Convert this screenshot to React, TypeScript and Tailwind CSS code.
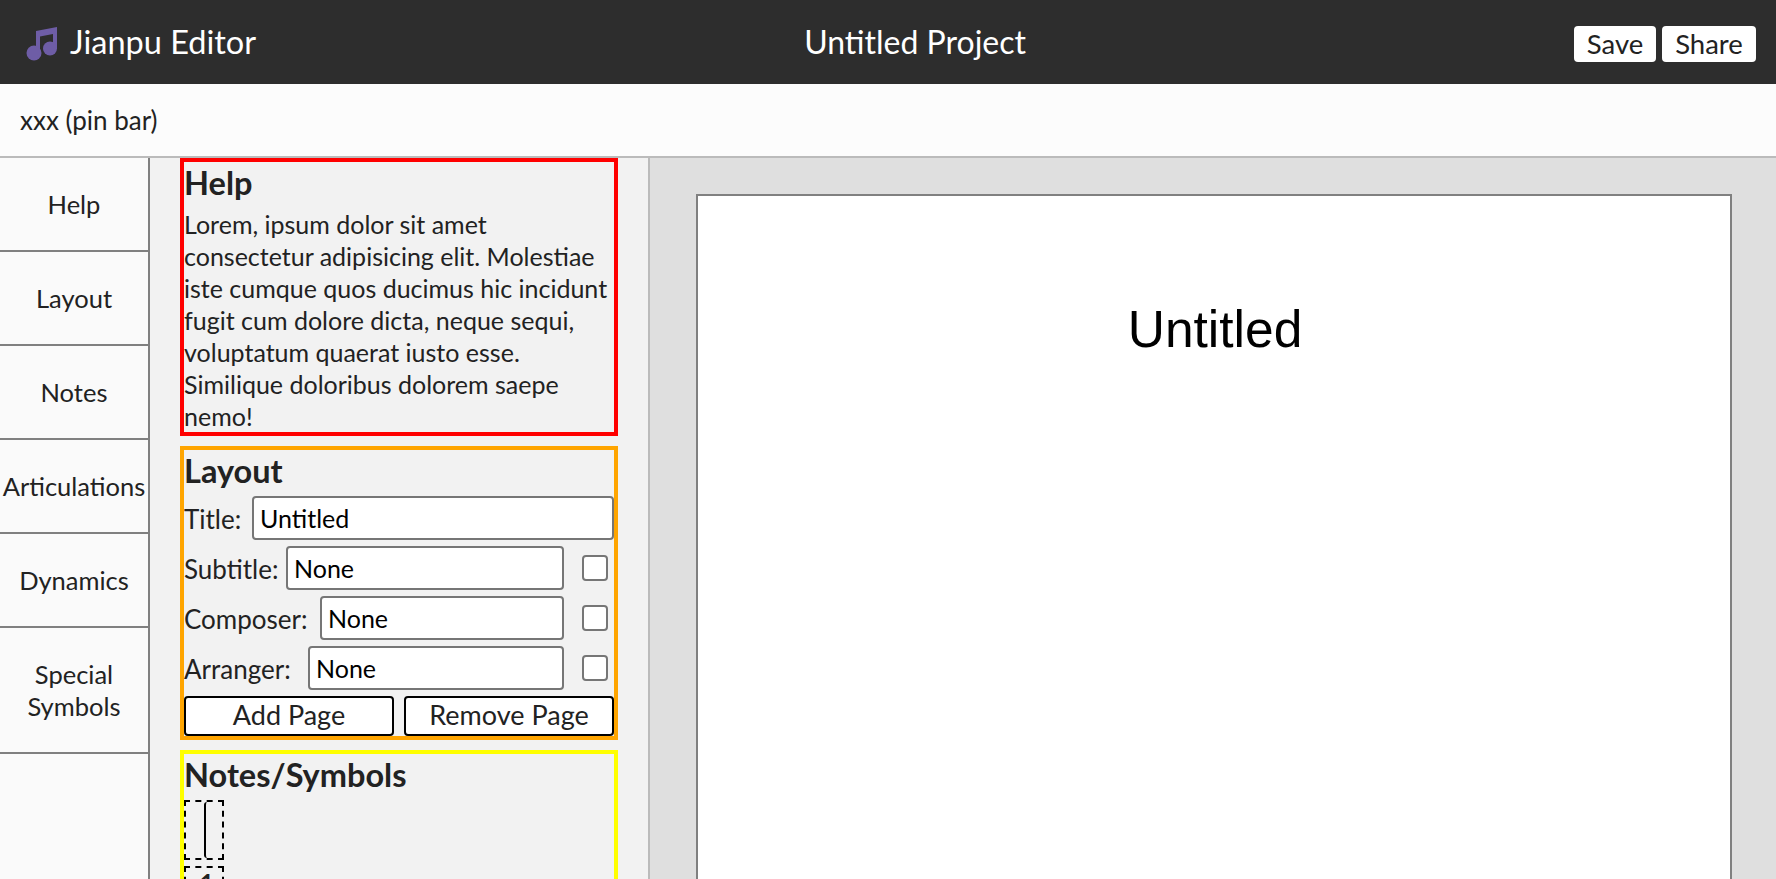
const font = "font-['Lato','Noto_Sans',sans-serif]";

function Field({ label, value, width, check }: { label: string; value: string; width: string; check?: boolean }) {
  return (
    <div className="flex items-center h-[44px] mb-[6px]">
      <label className="pt-[3px] text-[26px] text-[#222]">{label}</label>
      <input readOnly value={value} className={`ml-auto ${width} h-[44px] bg-white border-2 border-[#767676] rounded-[4px] px-[6px] text-[25px] text-black outline-none`} />
      {check && <input type="checkbox" readOnly className="appearance-none w-[26px] h-[26px] bg-white border-2 border-[#767676] rounded-[4px] ml-[18px] mr-[6px]" />}
    </div>
  );
}

function NoteIcon() {
  return (
    <svg viewBox="0 0 32 34" className="w-[32px] h-[34px] blur-[0.4px] mt-[4px]">
      <path d="M10 4 L31 0 V22 h-4 V7 L14 9.5 V27 h-4 Z" fill="#6e5da6" />
      <circle cx="8" cy="26" r="7.5" fill="#6e5da6" />
      <circle cx="24" cy="21.5" r="7" fill="#6e5da6" />
    </svg>
  );
}

const tabs = ["Help", "Layout", "Notes", "Articulations", "Dynamics", "Special Symbols"];

export default function App() {
  return (
    <div className={`h-screen overflow-hidden flex flex-col bg-[#fcfcfc] ${font}`}>
      <header className="h-[84px] shrink-0 bg-[#2d2d2d] flex items-center justify-between pl-[26px] pr-[20px] text-white">
        <div className="flex items-center gap-[12px] text-[32.5px]">
          <NoteIcon />
          <span>Jianpu Editor</span>
        </div>
        <div className="text-[32px]">Untitled Project</div>
        <div className="flex gap-[6px] text-[27.5px] text-[#222] mt-[4px]">
          <button className="h-[36px] w-[82px] bg-white rounded-[4px] flex items-center justify-center">Save</button>
          <button className="h-[36px] w-[94px] bg-white rounded-[4px] flex items-center justify-center">Share</button>
        </div>
      </header>
      <div className="h-[74px] shrink-0 border-b-2 border-[#bbb] flex items-center px-[20px] text-[26px] text-[#222]">xxx (pin bar)</div>
      <div className="flex flex-1 min-h-0">
        <nav className="w-[150px] shrink-0 border-r-2 border-[#808080] bg-[#fafafa]">
          {tabs.map((t) => (
            <div key={t} className={`border-b-2 border-[#808080] flex items-center justify-center text-center text-[25.5px] leading-[32px] text-[#222] ${t === "Special Symbols" ? "h-[126px] px-[20px]" : "h-[94px]"}`}>
              {t}
            </div>
          ))}
        </nav>
        <aside className="w-[500px] shrink-0 bg-[#f2f2f2] border-r-2 border-[#bbb] px-[30px] text-[#222] text-[26px]">
          <section className="border-4 border-[#ff0000] mb-[10px] h-[278px]">
            <h2 className="text-[32.5px] font-bold leading-[42px]">Help</h2>
            <p className="text-[25px] leading-[32px] pt-[4px] whitespace-nowrap">
              Lorem, ipsum dolor sit amet<br />
              consectetur adipisicing elit. Molestiae<br />
              iste cumque quos ducimus hic incidunt<br />
              fugit cum dolore dicta, neque sequi,<br />
              voluptatum quaerat iusto esse.<br />
              Similique doloribus dolorem saepe<br />
              nemo!
            </p>
          </section>
          <section className="border-4 border-[#ffa500] mb-[10px] h-[294px]">
            <h2 className="text-[32.5px] font-bold leading-[42px] mb-[4px]">Layout</h2>
            <Field label="Title:" value="Untitled" width="w-[362px]" />
            <Field label="Subtitle:" value="None" width="w-[278px]" check />
            <Field label="Composer:" value="None" width="w-[244px]" check />
            <Field label="Arranger:" value="None" width="w-[256px]" check />
            <div className="flex justify-between text-[27px] leading-[32px]">
              <button className="w-[210px] h-[40px] pb-[3px] bg-white border-2 border-black rounded-[4px]">Add Page</button>
              <button className="w-[210px] h-[40px] pb-[3px] bg-white border-2 border-black rounded-[4px]">Remove Page</button>
            </div>
          </section>
          <section className="border-4 border-[#ffff00] h-[300px]">
            <h2 className="text-[32.5px] font-bold leading-[42px] mb-[4px]">Notes/Symbols</h2>
            <div className="w-[40px] h-[60px] border-2 border-dashed border-black flex justify-end mb-[6px]">
              <div className="w-[18px] border-l-2 border-black rounded-l-[3px]" />
            </div>
            <div className="w-[40px] h-[60px] border-2 border-dashed border-black pl-[14px] text-[24px] font-bold leading-[30px]">1</div>
          </section>
        </aside>
        <main className="flex-1 bg-[#dfdfdf] pl-[46px] pr-[44px] pt-[36px]">
          <div className="h-[900px] bg-white border-2 border-[#808080]">
            <div className="pt-[102px] pl-[2px] text-center text-[51.5px] leading-[62px] text-black font-['Liberation_Sans',sans-serif]">Untitled</div>
          </div>
        </main>
      </div>
    </div>
  );
}
